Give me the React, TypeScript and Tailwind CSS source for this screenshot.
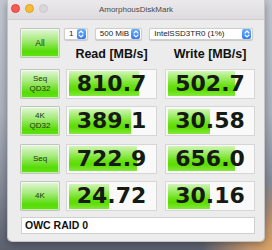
import React from "react";

const Chevrons = () => (
  <svg width="6" height="8" viewBox="0 0 6 8" fill="none">
    <path d="M1 3 L3 1 L5 3" stroke="white" strokeWidth="1.1" strokeLinecap="round" strokeLinejoin="round" />
    <path d="M1 5 L3 7 L5 5" stroke="white" strokeWidth="1.1" strokeLinecap="round" strokeLinejoin="round" />
  </svg>
);

const Select = ({ label, w }: { label: string; w: string }) => (
  <div className={`${w} h-[12px] flex items-center justify-between bg-white border border-[#cfcfcf] rounded-[2px] shadow-[0_0.5px_1px_rgba(0,0,0,0.15)] pl-[4px] pr-[1px]`}>
    <span className="text-[8px] leading-none text-[#222]">{label}</span>
    <div className="w-[9px] h-[10px] rounded-[2px] bg-[linear-gradient(to_bottom,#6aaefb,#2f7cf0)] flex items-center justify-center">
      <Chevrons />
    </div>
  </div>
);

const GreenButton = ({ lines }: { lines: string[] }) => (
  <div className="h-[30px] w-[40px] border border-[#c2c2c2] rounded-[1px] bg-[linear-gradient(to_bottom,#e4f6da_0%,#a6ea7c_40%,#56dc06_80%,#62e016_100%)] flex flex-col items-center justify-center shadow-[inset_0_0_0_1px_rgba(255,255,255,0.6)]">
    {lines.map((l) => (
      <span key={l} className="text-[8px] leading-[10px] text-[#1d3614]">{l}</span>
    ))}
  </div>
);

const Cell = ({ value, pct, w }: { value: string; pct: number; w: string }) => (
  <div className={`${w} h-[30px] border border-[#d6d6d6] bg-[#f9f9f9] p-[1.5px] relative`}>
    <div className="h-full relative">
      <div
        className="h-full bg-[linear-gradient(to_bottom,#d2f4b8_0%,#9bec62_30%,#66e010_60%,#5cdc00_75%,#84e840_100%)]"
        style={{ width: `${pct}%` }}
      />
      <div className="absolute inset-0 flex items-center justify-center">
        <span className="font-['DejaVu_Sans',sans-serif] font-bold text-[22px] leading-none text-[#151a12]">
          {value}
        </span>
      </div>
    </div>
  </div>
);

const rows = [
  { lines: ["Seq", "QD32"], r: "810.7", rp: 82, w: "502.7", wp: 79 },
  { lines: ["4K", "QD32"], r: "389.1", rp: 73, w: "30.58", wp: 50 },
  { lines: ["Seq"], r: "722.9", rp: 80, w: "656.0", wp: 79 },
  { lines: ["4K"], r: "24.72", rp: 47, w: "30.16", wp: 50 },
];

export default function App() {
  return (
    <div className="w-[272px] h-[250px] overflow-hidden font-['Liberation_Sans',Arial,sans-serif] bg-[radial-gradient(circle_at_100%_100%,#d9a463_0px,#c89a70_22px,transparent_70px),linear-gradient(to_bottom,#c4c9d3_0%,#aeb4c0_45%,#858b99_75%,#5c6170_100%)] px-[7px] pb-[8px]">
      <div className="h-[242px] flex flex-col rounded-b-[5px] overflow-hidden shadow-[0_2px_8px_rgba(0,0,0,0.35)] border-x border-b border-[#c4c4c4]">
        {/* title bar */}
        <div className="h-[20px] shrink-0 relative flex items-center justify-center bg-[linear-gradient(to_bottom,#ebe9eb,#dedcde)] border-b border-[#cfcdcf]">
          <div className="absolute left-[3px] top-[4px] flex gap-[5px]">
            <div className="w-[9px] h-[9px] rounded-full bg-[#f25c55] border border-[#e0443e]" />
            <div className="w-[9px] h-[9px] rounded-full bg-[#f7bb36] border border-[#dea123]" />
            <div className="w-[9px] h-[9px] rounded-full bg-[#d8d6d8] border border-[#cbc9cb]" />
          </div>
          <span className="text-[8px] text-[#4a4a4a] leading-none">AmorphousDiskMark</span>
        </div>
        {/* body */}
        <div className="flex-1 bg-[#ececec] pl-[12px] pr-[10px] pt-[8px]">
          <div className="grid grid-cols-[40px_91px_90px] gap-x-[6px] gap-y-[7.5px]">
            {/* top row */}
            <div className="h-[30px] w-[40px] border border-[#c2c2c2] rounded-[1px] bg-[linear-gradient(to_bottom,#e4f6da_0%,#a6ea7c_40%,#56dc06_80%,#62e016_100%)] flex items-center justify-center shadow-[inset_0_0_0_1px_rgba(255,255,255,0.6)]">
              <span className="text-[8.5px] text-[#1d3614]">All</span>
            </div>
            <div className="col-span-2 flex flex-col">
              <div className="flex gap-[7px] -ml-[2px]">
                <Select label="1" w="w-[24px]" />
                <Select label="500 MiB" w="w-[48px]" />
                <Select label="IntelSSD3TR0 (1%)" w="w-[105px]" />
              </div>
              <div className="grid grid-cols-[91px_90px] gap-x-[8px] mt-[7px]">
                <div className="text-center font-bold text-[12.5px] leading-[14px] text-[#111]">Read [MB/s]</div>
                <div className="text-center font-bold text-[12.5px] leading-[14px] text-[#111]">Write [MB/s]</div>
              </div>
            </div>
            {rows.map((row, i) => (
              <React.Fragment key={i}>
                <GreenButton lines={row.lines} />
                <Cell value={row.r} pct={row.rp} w="w-[91px]" />
                <div className="pl-[2px]">
                  <Cell value={row.w} pct={row.wp} w="w-[90px]" />
                </div>
              </React.Fragment>
            ))}
          </div>
          <div className="mt-[6px] ml-[1px] h-[17px] bg-white border border-[#cfcfcf] flex items-center pl-[3px] w-[234px]">
            <span className="text-[10.5px] font-bold text-[#111] leading-none">OWC RAID 0</span>
          </div>
        </div>
      </div>
    </div>
  );
}
